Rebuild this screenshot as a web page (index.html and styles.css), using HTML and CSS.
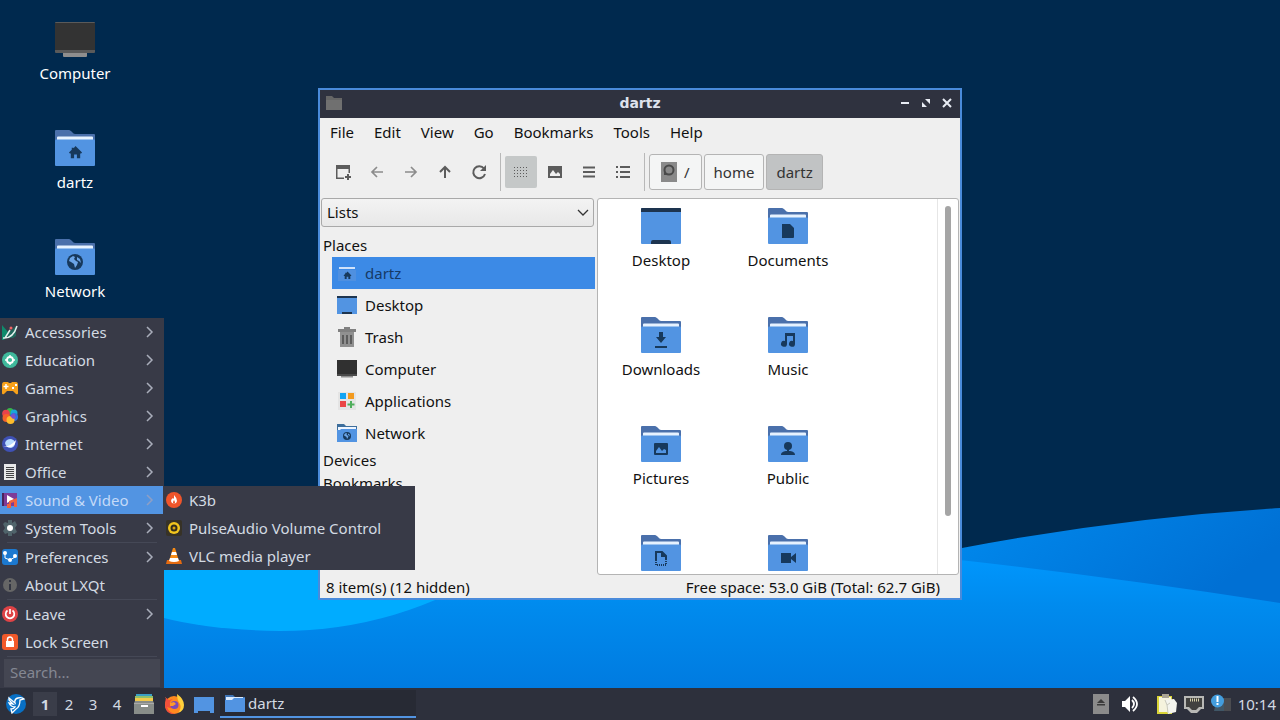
FILE: index.html
```html
<!DOCTYPE html>
<html lang="en">
<head>
    <meta charset="UTF-8">
    <title>LXQt Desktop</title>
    <link rel="stylesheet" href="styles.css">
</head>
<body>
    <!-- shared icon shapes -->
    <svg class="defs" aria-hidden="true">
        <symbol id="folder" viewBox="0 0 40 40">
            <path d="M1 2h13c2 0 4 4 6 4h19a1 1 0 0 1 1 1v12H0V3a1 1 0 0 1 1-1z" fill="#4a70ab"/>
            <path d="M3 8.5h34a1 1 0 0 1 1 1V15H2V9.500a1 1 0 0 1 1-1z" fill="#e6f2ff"/>
            <path d="M0 12.500q0-1 1-1h38q1 0 1 1V37a1 1 0 0 1-1 1H1a1 1 0 0 1-1-1z" fill="#5294e2"/>
        </symbol>
        <symbol id="house" viewBox="0 0 16 16">
            <path d="M8 1l7 7-1 1h-1v5H9.500v-4h-3v4H3V9H2L1 8l3-3V3h2v.5z" fill="#17395c"/>
        </symbol>
        <symbol id="globe" viewBox="0 0 16 16">
            <circle cx="8" cy="8" r="8" fill="#17395c"/>
            <path d="M3 4l3-2 2 1-1 2 2 2 2 1-1 3-2 3-1-4-3-2-2-1z M10 3l3 2 1 4-2-2-2-1z" fill="#6ba5e8"/>
        </symbol>
        <symbol id="desk" viewBox="0 0 40 40">
            <path d="M0 3a1 1 0 0 1 1-1h38a1 1 0 0 1 1 1v34a1 1 0 0 1-1 1H1a1 1 0 0 1-1-1z" fill="#5294e2"/>
            <path d="M0 6V3a1 1 0 0 1 1-1h38a1 1 0 0 1 1 1v3zM10 38v-2q0-2 2-2h16q2 0 2 2v2z" fill="#1d344f"/>
        </symbol>
        <symbol id="monitor" viewBox="0 0 40 40">
            <path d="M8 33h24v4a1 1 0 0 1-1 1H9a1 1 0 0 1-1-1z" fill="#8e8e8e"/>
            <path d="M0 4a1 1 0 0 1 1-1h38a1 1 0 0 1 1 1v29a1 1 0 0 1-1 1H1a1 1 0 0 1-1-1z" fill="#5a5a5a"/>
            <path d="M0 4h40v27H0z" fill="#333"/>
        </symbol>
        <symbol id="arrow" viewBox="0 0 8 12">
            <path d="M1 1l5 5-5 5" fill="none" stroke="currentColor" stroke-width="1.500"/>
        </symbol>
    </svg>

    <div class="screen">
        <main class="desktop">
            <svg class="wallpaper" viewBox="0 0 1280 688" preserveAspectRatio="none" aria-hidden="true">
                <defs>
                    <linearGradient id="far" x1="0" y1="0" x2="1" y2=".2">
                        <stop offset=".70" stop-color="#008cf0"/>
                        <stop offset="1" stop-color="#0070d4"/>
                    </linearGradient>
                    <linearGradient id="near" x1="0" y1="0" x2="0" y2="1">
                        <stop offset="0" stop-color="#0096fc"/>
                        <stop offset=".35" stop-color="#008bee"/>
                        <stop offset="1" stop-color="#007be0"/>
                    </linearGradient>
                </defs>
                <rect width="1280" height="688" fill="#00294e"/>
                <path d="M0 688V540H900Q962 546 962 548Q1120 518 1280 508V688z" fill="url(#far)"/>
                <path d="M0 560H960Q1120 578 1280 603V688H0z" fill="url(#near)"/>
                <path d="M0 520H500V565Q400 631 280 631Q210 630 164 618L0 570z" fill="#00acff"/>
            </svg>

            <div class="desktop-icons">
                <a class="item" href="#">
                    <svg class="icon-lg"><use href="#monitor"/></svg>
                    <span>Computer</span>
                </a>
                <a class="item" href="#">
                    <svg class="icon-lg" viewBox="0 0 40 40"><use href="#folder"/><use href="#house" x="13" y="17" width="15" height="15"/></svg>
                    <span>dartz</span>
                </a>
                <a class="item" href="#">
                    <svg class="icon-lg" viewBox="0 0 40 40"><use href="#folder"/><use href="#globe" x="12" y="17" width="16" height="16"/></svg>
                    <span>Network</span>
                </a>
            </div>

            <section class="window">
                <header class="titlebar">
                    <svg class="title-icon" viewBox="0 0 16 16"><path d="M0 1h6l2 2h8v12H0z" fill="#666"/><path d="M0 5h16v10H0z" fill="#707070"/></svg>
                    <h1>dartz</h1>
                    <div class="title-buttons">
                        <button aria-label="Minimize"><svg viewBox="0 0 10 10"><path d="M1 5h8" stroke="#e8ecf4" stroke-width="2"/></svg></button>
                        <button aria-label="Maximize"><svg viewBox="0 0 10 10"><path d="M4 1h5v5zM1 4v5h5z" fill="#e8ecf4"/></svg></button>
                        <button aria-label="Close"><svg viewBox="0 0 10 10"><path d="M1 1l8 8M9 1L1 9" stroke="#e8ecf4" stroke-width="2"/></svg></button>
                    </div>
                </header>

                <nav class="menubar">
                    <button>File</button>
                    <button>Edit</button>
                    <button>View</button>
                    <button>Go</button>
                    <button>Bookmarks</button>
                    <button>Tools</button>
                    <button>Help</button>
                </nav>

                <div class="toolbar">
                    <button class="tool" aria-label="New tab"><svg viewBox="0 0 16 16"><path d="M1 1h14v8h-1.500V5h-11v8.500H9V15H1z"/><path d="M13 10v6M10 13h6" stroke="#5c5c5c" stroke-width="2"/></svg></button>
                    <button class="tool dim" aria-label="Back"><svg viewBox="0 0 16 16"><path d="M14 8H3M8 3L3 8l5 5" fill="none" stroke="currentColor" stroke-width="1.700"/></svg></button>
                    <button class="tool dim" aria-label="Forward"><svg viewBox="0 0 16 16"><path d="M2 8h11M8 3l5 5-5 5" fill="none" stroke="currentColor" stroke-width="1.700"/></svg></button>
                    <button class="tool" aria-label="Up"><svg viewBox="0 0 16 16"><path d="M8 14V3M3 8l5-5 5 5" fill="none" stroke="currentColor" stroke-width="2"/></svg></button>
                    <button class="tool" aria-label="Reload"><svg viewBox="0 0 16 16"><path d="M13 4.500A6 6 0 1 0 14 10" fill="none" stroke="currentColor" stroke-width="2"/><path d="M15 1v6H9z"/></svg></button>
                    <span class="divider"></span>
                    <button class="tool on" aria-label="Icon view"><svg viewBox="0 0 16 16"><path d="M1 3h15M1 6h15M1 9h15M1 12h15" stroke="currentColor" stroke-width="1" stroke-dasharray="1 2" transform="translate(0 .5)"/></svg></button>
                    <button class="tool" aria-label="Thumbnail view"><svg viewBox="0 0 16 16"><path fill-rule="evenodd" d="M1 2h14v12H1zM3 12h10v-2l-2-2-2 2-3-4-3 4z"/></svg></button>
                    <button class="tool" aria-label="Compact view"><svg viewBox="0 0 16 16"><path d="M2 3.500h12M2 8h12M2 12.500h12" stroke="currentColor" stroke-width="2"/></svg></button>
                    <button class="tool" aria-label="Detailed list view"><svg viewBox="0 0 16 16"><path d="M1 3h2M5 3h10M1 8h2M5 8h10M1 13h2M5 13h10" stroke="currentColor" stroke-width="2"/></svg></button>
                    <span class="divider"></span>
                    <div class="path">
                        <button><svg class="disk" viewBox="0 0 16 20"><path d="M0 0h16v20H0z" fill="#8a8a8a"/><circle cx="8" cy="8" r="4.500" fill="none" stroke="#4a4a4a" stroke-width="2"/><path d="M3 8v5h4z" fill="#4a4a4a"/></svg>/</button>
                        <button>home</button>
                        <button class="on">dartz</button>
                    </div>
                </div>

                <div class="panes">
                    <aside class="sidebar">
                        <select aria-label="Side pane mode">
                            <option>Lists</option>
                        </select>
                        <h2>Places</h2>
                        <ul>
                            <li class="selected"><a href="#"><svg viewBox="0 0 20 20"><path d="M2 4h16v2H2z" fill="#cfe2fa"/><path d="M1 7h18v11H1z" fill="#4f90e0"/><use href="#house" x="6" y="8" width="9" height="9"/></svg>dartz</a></li>
                            <li><a href="#"><svg viewBox="0 0 20 20"><path d="M0 1h20v18H0z" fill="#5294e2"/><path d="M0 1h20v2H0zM5 17h10v2H5z" fill="#1d344f"/></svg>Desktop</a></li>
                            <li><a href="#"><svg viewBox="0 0 20 20"><path d="M1 2h6V0h6v2h6v3H1z" fill="#808080"/><path d="M3 5h14v15H3z" fill="#909090"/><path d="M6 8v9M10 8v9M14 8v9" stroke="#5c5c5c" stroke-width="2"/></svg>Trash</a></li>
                            <li><a href="#"><svg viewBox="0 0 20 20"><path d="M4 16h12v2.500H4z" fill="#8e8e8e"/><path d="M0 1h20v16H0z" fill="#4a4a4a"/><path d="M0 1h20v14H0z" fill="#303030"/></svg>Computer</a></li>
                            <li><a href="#"><svg viewBox="0 0 20 20"><path d="M1 1h18v18H1z" fill="#e4e4e4"/><path d="M3 2h6v6H3z" fill="#12a4f4"/><path d="M11 2h6v6h-6z" fill="#f39a1e"/><path d="M3 10h6v6H3z" fill="#ea4545"/><path d="M14 10v7M10.500 13.500h7" stroke="#4fae5c" stroke-width="2"/></svg>Applications</a></li>
                            <li><a href="#"><svg viewBox="0 0 20 20"><path d="M0 1h7l2 2h11v7H0z" fill="#3d6e9c"/><path d="M1 4h18v4H1z" fill="#eef5ff"/><path d="M0 7h3l1-1h16v13H0z" fill="#5294e2"/><use href="#globe" x="6" y="9" width="8" height="8"/></svg>Network</a></li>
                        </ul>
                        <h2>Devices</h2>
                        <h2>Bookmarks</h2>
                    </aside>

                    <div class="view">
                        <div class="files">
                            <a class="item" href="#"><svg class="icon-lg"><use href="#desk"/></svg><span>Desktop</span></a>
                            <a class="item" href="#"><svg class="icon-lg" viewBox="0 0 40 40"><use href="#folder"/><path d="M14 18h8l4 4v9a1 1 0 0 1-1 1H14z" fill="#17395c"/></svg><span>Documents</span></a>
                            <a class="item" href="#"><svg class="icon-lg" viewBox="0 0 40 40"><use href="#folder"/><path d="M18 17h4v5h3l-5 6-5-6h3zM14 31h12v2H14z" fill="#17395c"/></svg><span>Downloads</span></a>
                            <a class="item" href="#"><svg class="icon-lg" viewBox="0 0 40 40"><use href="#folder"/><path d="M17 18h10v11a3 3 0 1 1-2-3v-5h-6v8a3 3 0 1 1-2-3z" fill="#17395c"/></svg><span>Music</span></a>
                            <a class="item" href="#"><svg class="icon-lg" viewBox="0 0 40 40"><use href="#folder"/><path fill-rule="evenodd" d="M14 19h12a1 1 0 0 1 1 1v10a1 1 0 0 1-1 1H14a1 1 0 0 1-1-1V20a1 1 0 0 1 1-1zM15 29h10v-3l-2-1-2 2-3-4-3 4z" fill="#17395c"/></svg><span>Pictures</span></a>
                            <a class="item" href="#"><svg class="icon-lg" viewBox="0 0 40 40"><use href="#folder"/><circle cx="20" cy="22" r="4" fill="#17395c"/><path d="M19 24h2v3c3 0 6 1 6 4H13c0-3 3-4 6-4z" fill="#17395c"/></svg><span>Public</span></a>
                            <a class="item" href="#" aria-label="Templates"><svg class="icon-lg" viewBox="0 0 40 40"><use href="#folder"/><path d="M15 27v-8h6l4 4v4M21 19v4h4" fill="none" stroke="#17395c" stroke-width="2"/><path d="M15 27v5h10v-5" fill="none" stroke="#17395c" stroke-width="2" stroke-dasharray="1 1"/></svg></a>
                            <a class="item" href="#" aria-label="Videos"><svg class="icon-lg" viewBox="0 0 40 40"><use href="#folder"/><path d="M13 20h10v4l5-4v10l-5-4v4H13z" fill="#17395c"/></svg></a>
                        </div>
                        <div class="scrollbar"><div class="thumb"></div></div>
                    </div>
                </div>

                <footer class="statusbar">
                    <span>8 item(s) (12 hidden)</span>
                    <span>Free space: 53.0 GiB (Total: 62.7 GiB)</span>
                </footer>
            </section>

            <nav class="menu start-menu">
                <button><svg viewBox="0 0 16 16"><path d="M0 1l6 7-4 8H0z" fill="#0f8a6c"/><path d="M1 14L14 2v10l-3 2z" fill="#20685c"/><path d="M1 14q10 1 14-12M3 14L8 6" fill="none" stroke="#e4f1ee" stroke-width="1.500"/><circle cx="9" cy="4" r="1.500" fill="#e66"/></svg>Accessories<svg class="more"><use href="#arrow"/></svg></button>
                <button><svg viewBox="0 0 16 16"><circle cx="8" cy="8" r="8" fill="#3fb99c"/><circle cx="8" cy="8" r="3" fill="none" stroke="#fff" stroke-width="1.800"/><path d="M8 3v2M8 11v2M3 8h2M11 8h2" stroke="#fff" stroke-width="1.500"/></svg>Education<svg class="more"><use href="#arrow"/></svg></button>
                <button><svg viewBox="0 0 16 16"><path d="M2 2h4l1 1h2l1-1h4q2 0 2 3v8q0 2-2 1l-3-3H5l-3 3q-2 1-2-1V5q0-3 2-3z" fill="#f7a11b"/><path d="M4 4v5M1.500 6.500h5" stroke="#fff" stroke-width="1.500"/><path d="M10 8h2M13 5h2" stroke="#fff" stroke-width="2"/></svg>Games<svg class="more"><use href="#arrow"/></svg></button>
                <button><svg viewBox="0 0 16 16"><circle cx="8" cy="3.500" r="3.500" fill="#39b54a"/><circle cx="12" cy="5" r="3.500" fill="#1aa5d8"/><circle cx="12" cy="9" r="4" fill="#2f6fe0"/><circle cx="4" cy="5.500" r="3.800" fill="#e8434b"/><circle cx="4.500" cy="10" r="4" fill="#f5622a"/><circle cx="8.500" cy="12" r="4" fill="#fdbc2c"/><path d="M8 8l4-3 2 5-3 1z" fill="#7b52c8"/></svg>Graphics<svg class="more"><use href="#arrow"/></svg></button>
                <button><svg viewBox="0 0 16 16"><circle cx="8" cy="8" r="8" fill="#3f51b5"/><path d="M3 7q1-4 6-4 4 1 4 4 0 4-4 5-5 0-6-5z" fill="#b9dcff"/><path d="M1 11Q8 11 14 4q-1 8-8 7z" fill="#fff"/></svg>Internet<svg class="more"><use href="#arrow"/></svg></button>
                <button><svg viewBox="0 0 16 16"><path d="M2 0h12v16H2z" fill="#e8e8e8"/><path d="M4 3.500h8M4 5.500h8M4 7.500h8M4 9.500h8M4 11.500h8M4 13.500h8" stroke="#444" stroke-width="1"/></svg>Office<svg class="more"><use href="#arrow"/></svg></button>
                <button class="active"><svg viewBox="0 0 16 16"><path d="M0 1h15v13H0z" fill="#7d3c98"/><path d="M0 1h2v13H0z" fill="#4a235a"/><path d="M5 3l7 4-7 4z" fill="#fff"/><path d="M7 9l8-3v9h-3v-5l-3 1v5H5v-4h2z" fill="#f0643c"/></svg>Sound &amp; Video<svg class="more"><use href="#arrow"/></svg></button>
                <button><svg viewBox="0 0 16 16"><path d="M6 0h4v3l3-2 2 4-2 3 2 4-3 2-2-1v3H6v-3l-3 1-2-3 2-3-2-4 2-2 3 1z" fill="#50646b"/><circle cx="8" cy="8" r="3" fill="#fff"/></svg>System Tools<svg class="more"><use href="#arrow"/></svg></button>
                <hr>
                <button><svg viewBox="0 0 16 16"><rect width="16" height="16" rx="3" fill="#1c79d0"/><path d="M3 5v4l5 2 5-3" fill="none" stroke="#fff" stroke-width="1"/><circle cx="3" cy="4" r="2" fill="#fff"/><circle cx="8" cy="11" r="2" fill="#fff"/><circle cx="13" cy="7" r="2" fill="#fff"/></svg>Preferences<svg class="more"><use href="#arrow"/></svg></button>
                <button><svg viewBox="0 0 16 16"><circle cx="8" cy="8" r="7" fill="#666"/><path d="M8 3v2M8 7v6" stroke="#333642" stroke-width="2"/></svg>About LXQt</button>
                <hr>
                <button><svg viewBox="0 0 16 16"><circle cx="8" cy="8" r="8" fill="#df4346"/><path d="M5.500 4.500a4.300 4.300 0 1 0 5 0M8 3v5" fill="none" stroke="#fff" stroke-width="1.700"/></svg>Leave<svg class="more"><use href="#arrow"/></svg></button>
                <button><svg viewBox="0 0 16 16"><rect width="16" height="16" rx="3" fill="#f1592a"/><path d="M4 7h8v6H4z" fill="#fff"/><path d="M5.500 7V5.500a2.500 2.500 0 0 1 5 0V7" fill="none" stroke="#fff" stroke-width="1.500"/></svg>Lock Screen</button>
                <hr>
                <input type="search" placeholder="Search..." aria-label="Search">
            </nav>

            <nav class="menu submenu">
                <button><svg viewBox="0 0 16 16"><circle cx="8" cy="8" r="8" fill="#f0552b"/><path d="M8 3q3 3 3 6 0 2-3 3-3-1-3-3 0-2 2-3l1 1z" fill="#fff"/><path d="M8 8q2 3 0 4-2-1 0-4z" fill="#f0552b"/></svg>K3b</button>
                <button><svg viewBox="0 0 16 16"><rect width="16" height="16" rx="2" fill="#373226"/><circle cx="8" cy="8" r="6" fill="#f2c51d"/><circle cx="8" cy="8" r="2.500" fill="#d8a40d" stroke="#332d1c" stroke-width="2"/></svg>PulseAudio Volume Control</button>
                <button><svg viewBox="0 0 16 16"><path d="M1 12h14l1 4H0z" fill="#e56b10"/><path d="M7 0h2l4 13q-5 2-10 0z" fill="#f78a15"/><path d="M6 4h4l1 3H5zM4 10h8l1 3q-5 2-10 0z" fill="#fff"/></svg>VLC media player</button>
            </nav>
        </main>

        <footer class="taskbar">
            <button class="launch start" aria-label="Application menu"><svg viewBox="0 0 20 20"><circle cx="10" cy="10" r="10" fill="#0870c5"/><path d="M3 4l6 5q-1-4 3-5 4-1 6 1l-4 1q0 7-4 9-2 2-4 4l-1-4q3 0 4-2-4 0-6-4l4 1-4-4z" fill="none" stroke="#fff" stroke-width="1.300"/></svg></button>
            <div class="pager">
                <button class="current">1</button>
                <button>2</button>
                <button>3</button>
                <button>4</button>
            </div>
            <div class="quick">
                <button class="launch" aria-label="File manager"><svg viewBox="0 0 20 20"><path d="M2 0h16v3H2z" fill="#3b9fc4"/><path d="M1 2h18v4H1z" fill="#8fc06c"/><path d="M1 4h18v4H1z" fill="#f2c94c"/><path d="M1 7h18l1 2v11H0V9z" fill="#888d89"/><path d="M0 9h20v1H0z" fill="#aaa"/><path d="M7 12h7" stroke="#fff" stroke-width="2"/></svg></button>
                <button class="launch" aria-label="Firefox"><svg viewBox="0 0 20 20"><circle cx="10" cy="11" r="9" fill="#ff8a1f"/><path d="M13 0q7 5 7 11 0 6-6 8 4-5 2-9-3-4-3-10z" fill="#ffd03c"/><path d="M1 3l4 3 4-1q-4 2-3 5l5 1q-2 5-8 2 2 6 9 7-9 1-11-7 0-5 1-10z" fill="#f2503b"/><circle cx="10.500" cy="11" r="4" fill="#7a4bb8"/><path d="M6 9l4-1 2 2-3 2H6z" fill="#ff9a2a"/></svg></button>
                <button class="launch" aria-label="Show desktop"><svg viewBox="0 0 20 20"><path d="M0 3h20v16h-4v-2H4v2H0z" fill="#5294e2"/></svg></button>
            </div>
            <button class="task"><svg viewBox="0 0 20 20"><path d="M0 2h8l2 2h10v8H0z" fill="#3f74b5"/><path d="M1 4h17v4H1z" fill="#dcecff"/><path d="M0 7h7l2-2h11v14H0z" fill="#5294e2"/></svg>dartz</button>
            <div class="tray">
                <button class="launch" aria-label="Removable media"><svg viewBox="0 0 20 20"><path d="M2 0h16v20H2z" fill="#8b8b8b"/><path d="M10 5l4 4H6zM6 10h8v1.500H6z" fill="#3b3b3b"/></svg></button>
                <button class="launch volume" aria-label="Volume"><svg viewBox="0 0 20 20"><path d="M2 7h3l5-5v16l-5-5H2z" fill="#fff"/><path d="M12 6q4 4 0 8M13 3q8 7 0 14" fill="none" stroke="#fff" stroke-width="1.800"/></svg></button>
                <button class="launch" aria-label="Clipboard"><svg viewBox="0 0 20 20"><path d="M0 2h15v18H0z" fill="#d9d437"/><path d="M2 3h12v15H2z" fill="#f5f3dd"/><path d="M5 0h7v4H5z" fill="#aaa492"/><path d="M8 6l9-1 3 4-1 9-8 2z" fill="#f3f4ee"/><path d="M8 6l2 5 1 8M10 11l3-2" fill="none" stroke="#c9c9ba" stroke-width="1"/></svg></button>
                <button class="launch" aria-label="Network"><svg viewBox="0 0 20 20"><path d="M0 2h20v13h-3l-4 4H7l-4-4H0z" fill="#b8b8b5"/><path d="M2 4h16v9h-3l-3 3H8l-3-3H2z" fill="#41413f"/><path d="M6 6h9" stroke="#d5cfaa" stroke-width="3" stroke-dasharray="1 1"/></svg></button>
                <button class="launch" aria-label="Notifications"><svg viewBox="0 0 20 20"><path d="M6 4h14v13H3z" fill="#405767"/><path d="M13 4h7v13h-7z" fill="#4b4c50"/><circle cx="6.500" cy="7" r="6.500" fill="#439ddd"/><path d="M6.500 2v6M6.500 9v2" stroke="#fff" stroke-width="2"/></svg></button>
                <time>10:14</time>
            </div>
        </footer>
    </div>
</body>
</html>
```
FILE: styles.css
```css
* { box-sizing: border-box; }
body { margin: 0; font: 15px/20px "Noto Sans", sans-serif; color: #111; }
h1, h2, ul { margin: 0; padding: 0; font-weight: normal; }
ul { list-style: none; }
a { color: inherit; text-decoration: none; }
button { padding: 0; border: none; background: none; color: inherit; font: inherit; cursor: pointer; }
svg { display: block; flex: none; }
.defs { position: absolute; width: 0; height: 0; }

.screen { display: flex; flex-direction: column; height: 100vh; overflow: hidden; }
.desktop { position: relative; flex: 1; min-height: 0; background: #00294e; }
.wallpaper { position: absolute; inset: 0; width: 100%; height: 100%; }

/* icon with a caption, on the desktop and in the file view */
.item { display: flex; flex-direction: column; align-items: center; gap: 4px; height: 109px; padding-top: 7px; }
.icon-lg { width: 40px; height: 40px; }
.desktop-icons { position: relative; width: 150px; padding-top: 12px; color: #fff; }

/* file manager window */
.window { position: absolute; left: 318px; top: 88px; width: 644px; height: 512px; display: flex; flex-direction: column; border: 2px solid #4a8bdb; background: #efefef; }
.titlebar { display: grid; grid-template-columns: 60px 1fr 60px; align-items: center; height: 28px; padding: 0 6px 2px; background: #2f323f; color: #dde1ec; }
.titlebar h1 { font: bold 14px/20px "DejaVu Sans", sans-serif; text-align: center; }
.title-icon { width: 16px; height: 16px; }
.title-buttons { display: flex; justify-content: flex-end; gap: 11px; padding-right: 2px; }
.title-buttons svg { width: 10px; height: 10px; }

.menubar { display: flex; height: 30px; padding-bottom: 2px; }
.menubar button { padding: 0 10px; }

.toolbar { display: flex; align-items: center; gap: 2px; height: 50px; padding: 0 7px 2px; }
.tool { display: grid; place-items: center; width: 32px; height: 32px; border-radius: 2px; color: #5c5c5c; }
.tool svg { width: 16px; height: 16px; fill: #5c5c5c; }
.tool.dim { color: #8c8c8c; }
.tool.on { background: #c5c8c8; }
.divider { width: 1px; height: 38px; margin: 0 2px 0 3px; background: #b8b8b8; }
.path { display: flex; gap: 2px; }
.path button { display: flex; align-items: center; gap: 7px; height: 36px; padding: 0 9px; border: 1px solid #b4b4b4; border-radius: 3px; background: #f4f5f5; color: #333; }
.path button:first-child { padding: 0 11px; }
.path .on { background: #c1c3c4; }
.disk { width: 16px; height: 20px; }

.panes { display: flex; flex: 1; min-height: 0; padding-right: 1px; }
.sidebar { width: 277px; padding: 0 2px 0 1px; overflow: hidden; }
.sidebar select { display: block; width: 273px; height: 29px; margin-bottom: 7px; padding: 0 5px 2px; border: 1px solid #a9a9a9; border-radius: 3px; font: inherit; color: #111; appearance: none; background: url("data:image/svg+xml,%3Csvg xmlns='http://www.w3.org/2000/svg' viewBox='0 0 12 8'%3E%3Cpath d='M1 1l5 5 5-5' fill='none' stroke='%23333' stroke-width='1.300'/%3E%3C/svg%3E") right 4px center / 12px 8px no-repeat, linear-gradient(#f3f3f3, #e8e8e8); }
.sidebar h2 { padding-left: 2px; font-size: 15px; line-height: 23px; }
.sidebar li { margin-left: 11px; }
.sidebar li a { display: flex; align-items: center; gap: 8px; height: 32px; padding-left: 5px; }
.sidebar li svg { width: 20px; height: 20px; }
.sidebar .selected { background: #3c8ae6; color: #163a66; }

.view { display: flex; flex: 1; border: 1px solid #b4b4b4; border-radius: 3px; background: #fff; overflow: hidden; }
.files { flex: 1; display: grid; grid-template-columns: repeat(auto-fill, 126px); column-gap: 1px; align-content: start; }
.scrollbar { width: 21px; padding: 7px; border-left: 1px solid #e6e6e6; }
.thumb { width: 6px; height: 310px; border-radius: 3px; background: #a5a5a5; }

.statusbar { display: flex; align-items: center; justify-content: space-between; height: 23px; padding: 0 20px 0 6px; }

/* popup menus */
.menu { position: absolute; display: flex; flex-direction: column; background: #383a47; color: #d3dae3; }
.menu button { display: flex; align-items: center; gap: 7px; height: 28px; padding: 0 10px 0 2px; text-align: left; }
.menu svg { width: 16px; height: 16px; }
.menu .more { width: 8px; height: 12px; margin-left: auto; color: #a9adba; }
.menu hr { width: 150px; height: 1px; margin: 0 auto; border: none; background: #454856; }
.menu .active { margin-right: 1px; padding-right: 9px; background: #5294e2; color: #c4daf8; }
.menu .active .more { color: #8e9fc5; }
.menu input { height: 28px; margin: 2px 4px 1px; padding: 0 6px 2px; border: none; background: #444652; color: #d3dae3; font: inherit; }
.menu input::placeholder { color: #858893; }
.start-menu { left: 0; bottom: 0; width: 164px; }
.submenu { left: 164px; top: 486px; width: 251px; }

/* panel */
.taskbar { display: flex; align-items: center; height: 32px; background: #2d303c; color: #d3dae3; }
.launch svg { width: 20px; height: 20px; }
.start { padding: 0 7px 0 6px; }
.pager { display: flex; }
.pager button { width: 24px; height: 24px; }
.pager .current { background: #3a3d49; font-weight: bold; }
.quick { display: flex; gap: 10px; padding: 0 6px 0 5px; }
.task { display: flex; align-items: center; gap: 3px; width: 196px; height: 28px; padding-left: 5px; border-bottom: 2px solid #5294e2; background: #272a34; }
.task svg { width: 20px; height: 20px; }
.tray { display: flex; align-items: center; gap: 7px; margin-left: auto; padding-right: 4px; }
.volume { margin: 0 10px 0 2px; }
```
